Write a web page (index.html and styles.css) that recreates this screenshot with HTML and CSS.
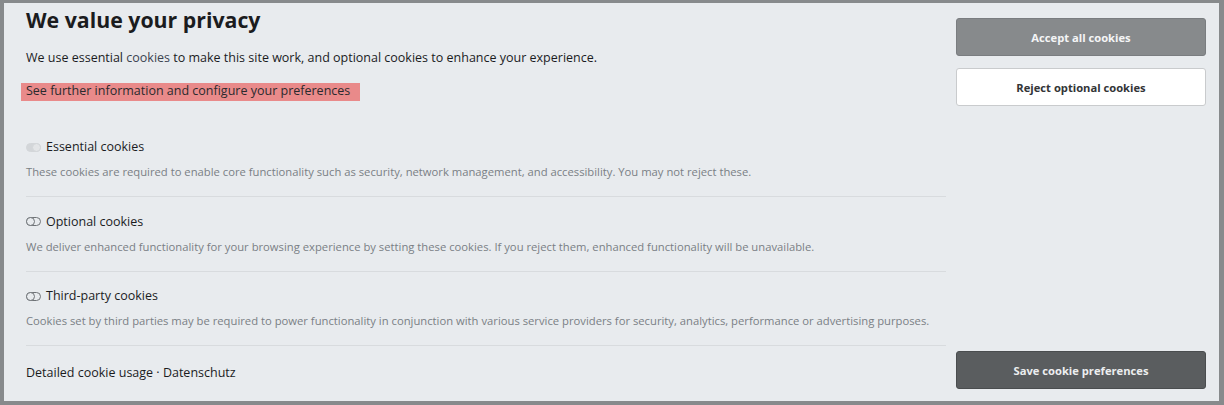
FILE: index.html
```html
<!DOCTYPE html>
<html lang="en">
<head>
<meta charset="utf-8">
<title>Cookie consent</title>
<link rel="stylesheet" href="styles.css">
</head>
<body>
<div class="panel">
  <div class="main">
    <h1 class="title">We value your privacy</h1>
    <p class="intro">We use essential <a class="inline-link" href="#">cookies</a> to make this site work, and optional cookies to enhance your experience.</p>
    <div class="more-row"><a class="more" href="#">See further information and configure your preferences</a></div>
    <div class="options">
      <div class="option">
        <div class="opt-head">
          <span class="toggle toggle-on"><span class="knob"></span></span>
          <span class="opt-label">Essential cookies</span>
        </div>
        <p class="opt-desc">These cookies are required to enable core functionality such as security, network management, and accessibility. You may not reject these.</p>
      </div>
      <div class="option">
        <div class="opt-head">
          <span class="toggle"><span class="knob"></span></span>
          <span class="opt-label">Optional cookies</span>
        </div>
        <p class="opt-desc">We deliver enhanced functionality for your browsing experience by setting these cookies. If you reject them, enhanced functionality will be unavailable.</p>
      </div>
      <div class="option">
        <div class="opt-head">
          <span class="toggle"><span class="knob"></span></span>
          <span class="opt-label">Third-party cookies</span>
        </div>
        <p class="opt-desc">Cookies set by third parties may be required to power functionality in conjunction with various service providers for security, analytics, performance or advertising purposes.</p>
      </div>
    </div>
    <div class="footer-links"><a href="#">Detailed cookie usage</a> · <a href="#">Datenschutz</a></div>
  </div>
  <div class="side">
    <div class="top-buttons">
      <button class="btn btn-accept">Accept all cookies</button>
      <button class="btn btn-reject">Reject optional cookies</button>
    </div>
    <button class="btn btn-save">Save cookie preferences</button>
  </div>
</div>
</body>
</html>
```
FILE: styles.css
```css
html, body {
  margin: 0;
  padding: 0;
}
body {
  background: #878a8c;
  width: 1224px;
  height: 405px;
  padding: 3px 5px 4px 4px;
  box-sizing: border-box;
  font-family: "Open Sans", "Noto Sans", sans-serif;
  color: #1b1c1e;
}
.panel {
  background: #e8ebee;
  height: 398px;
  display: flex;
  box-sizing: border-box;
  padding: 0 13px 0 22px;
}
.main {
  flex: 1;
  display: flex;
  flex-direction: column;
}
.title {
  margin: 5px 0 0 0;
  font-size: 21.3px;
  font-weight: 700;
  line-height: 24px;
}
.intro {
  margin: 17px 0 0 0;
  font-size: 12.5px;
  line-height: 18px;
}
.inline-link {
  color: #3b4350;
  text-decoration: none;
}
.more-row {
  margin-top: 16px;
  height: 18px;
  display: flex;
}
.more {
  display: block;
  margin-left: -5px;
  padding: 0 10px 0 5px;
  height: 18px;
  line-height: 15px;
  background: #e98a8a;
  color: #2a2a2e;
  font-size: 12.5px;
  text-decoration: none;
}
.options {
  margin-top: 37px;
}
.option {
  border-bottom: 1px solid #d8dbde;
  padding: 0 0 16px 0;
}
.option + .option {
  padding-top: 15.5px;
}
.opt-head {
  display: flex;
  align-items: center;
  gap: 5px;
  height: 18px;
}
.opt-label {
  font-size: 12.5px;
  line-height: 18px;
}
.toggle {
  position: relative;
  width: 13px;
  height: 7px;
  border: 1px solid #6f7377;
  border-radius: 5px;
  display: inline-block;
  box-sizing: content-box;
}
.toggle .knob {
  position: absolute;
  left: 0;
  top: 0;
  width: 7px;
  height: 7px;
  border-radius: 50%;
  border: 1px solid #6f7377;
  margin: -1px;
  background: #e8ebee;
  box-sizing: content-box;
}
.toggle-on {
  background: #d3d6d9;
  border-color: #d3d6d9;
}
.toggle-on .knob {
  left: auto;
  right: 0;
  background: #e3e5e7;
  border-color: #d3d6d9;
}
.opt-desc {
  margin: 8px 0 0 0;
  font-size: 11.25px;
  line-height: 16px;
  color: #7a7f85;
  white-space: nowrap;
}
.footer-links {
  margin-top: 17.5px;
  font-size: 12.5px;
  line-height: 18px;
}
.footer-links a {
  color: #1b1c1e;
  text-decoration: none;
}
.side {
  width: 250px;
  flex: none;
  display: flex;
  flex-direction: column;
  justify-content: space-between;
  padding: 15px 0 12px 0;
  margin-left: 10px;
}
.top-buttons {
  display: flex;
  flex-direction: column;
  gap: 12px;
}
.btn {
  width: 250px;
  height: 38px;
  border-radius: 3px;
  font-family: "Open Sans", "Noto Sans", sans-serif;
  font-size: 11.2px;
  font-weight: 700;
  cursor: pointer;
  box-sizing: border-box;
}
.btn-accept {
  background: #878a8c;
  border: 1px solid #7a7d80;
  color: #f4f5f6;
}
.btn-reject {
  background: #ffffff;
  border: 1px solid #c9cbcd;
  color: #333537;
}
.btn-save {
  background: #5a5d5f;
  border: 1px solid #4a4d4f;
  color: #eceeef;
}
```
